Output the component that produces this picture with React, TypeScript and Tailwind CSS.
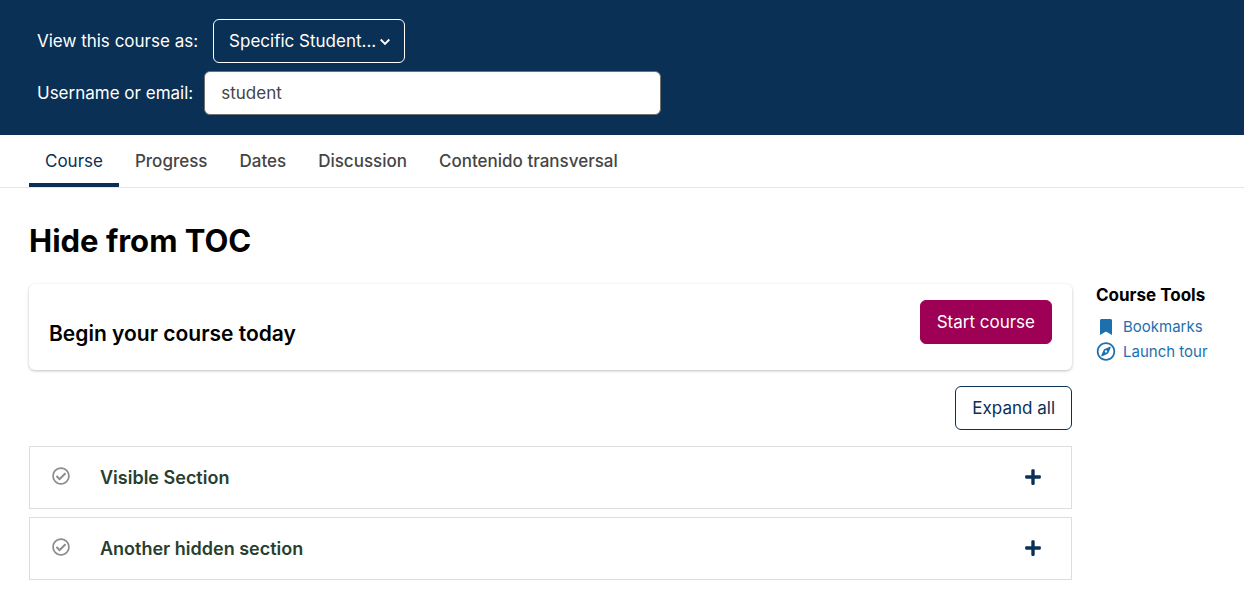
import { useState } from "react";
import { FaBookmark, FaPlus, FaRegCheckCircle, FaRegCompass } from "react-icons/fa";

const tabs = ["Course", "Progress", "Dates", "Discussion", "Contenido transversal"];
const sections = ["Visible Section", "Another hidden section"];

function MasqueradeBar() {
  const [user, setUser] = useState("student");
  return (
    <header className="flex h-[135px] flex-col gap-2 bg-[#0a3055] px-[37px] pt-[19px] text-white">
      <div className="flex items-center gap-[15px]">
        <label htmlFor="view-as">View this course as:</label>
        <div className="relative">
          <select
            id="view-as"
            className="h-11 w-48 appearance-none rounded-md border border-white bg-[#0a3055] pr-7 pl-[15px]"
          >
            <option>Specific Student...</option>
          </select>
          <svg
            viewBox="0 0 12 8"
            className="pointer-events-none absolute top-[19px] right-3.5 h-2 w-3"
            fill="none"
            stroke="currentColor"
            strokeWidth="1.9"
            aria-hidden="true"
          >
            <path d="M1.7 1.5 6 5.8l4.3-4.3" />
          </svg>
        </div>
      </div>
      <div className="flex items-center gap-[11px]">
        <label htmlFor="username">Username or email:</label>
        <input
          id="username"
          type="text"
          value={user}
          onChange={(e) => setUser(e.target.value)}
          className="h-11 w-full max-w-[457px] rounded-md border border-[#707070] bg-white px-4 text-[#454545]"
        />
      </div>
    </header>
  );
}

function CourseTabs() {
  return (
    <nav className="flex border-b border-[#e7e7e7] px-[29px]">
      {tabs.map((tab, i) => (
        <a
          key={tab}
          href="#"
          aria-current={i === 0 ? "page" : undefined}
          className={
            i === 0
              ? "h-[52px] border-b-4 border-[#0a3055] px-4 pt-3 text-[#0a3055]"
              : "h-[52px] px-4 pt-3 font-medium text-[#454545]"
          }
        >
          {tab}
        </a>
      ))}
    </nav>
  );
}

function Section({ title }: { title: string }) {
  return (
    <li className="flex h-[63px] items-center border border-[#dddddd] pr-[29px] pl-[22px]">
      <FaRegCheckCircle className="mb-1 size-[18px] text-[#8c8c8c]" aria-label="Incomplete section" />
      <h3 className="ml-[30px] flex-1 text-lg leading-7 font-semibold text-[#273f2f]">{title}</h3>
      <button type="button" className="mb-0.5" aria-label={"Expand " + title}>
        <FaPlus className="size-[18px] text-[#0a3055]" />
      </button>
    </li>
  );
}

export default function App() {
  return (
    <div className="bg-white font-['Inter',sans-serif] text-[17px] leading-7 text-black">
      <MasqueradeBar />
      <CourseTabs />
      <main className="px-[29px] pt-[33px]">
        <h1 className="text-[31px] leading-10 font-bold">Hide from TOC</h1>
        <div className="mt-[23px] flex gap-6">
          <div className="min-w-0 flex-1">
            <section className="flex h-[86px] items-start justify-between rounded-md px-5 pt-4 shadow-[0_1px_3px_rgba(0,0,0,0.25)]">
              <h2 className="mt-5 text-[21px] font-semibold">Begin your course today</h2>
              <button
                type="button"
                className="h-11 rounded-md border border-[#9d0054] bg-[#9d0054] px-4 text-white"
              >
                Start course
              </button>
            </section>
            <div className="mt-4 flex justify-end">
              <button type="button" className="h-11 rounded-md border border-[#0a3055] px-4 text-[#0a3055]">
                Expand all
              </button>
            </div>
            <ol className="mt-4 flex flex-col gap-2 pb-4">
              {sections.map((title) => (
                <Section key={title} title={title} />
              ))}
            </ol>
          </div>
          <aside className="w-[119px] shrink-0 whitespace-nowrap">
            <h2 className="-mt-[3px] font-bold">Course Tools</h2>
            <ul className="mt-[5px] text-[15px] leading-[25px] text-[#1d6fae]">
              <li>
                <a href="#" className="flex items-center gap-[7px]">
                  <FaBookmark className="h-4 w-5" aria-hidden="true" />
                  Bookmarks
                </a>
              </li>
              <li>
                <button type="button" className="flex items-center gap-[7px]">
                  <FaRegCompass className="h-[19px] w-5" aria-hidden="true" />
                  Launch tour
                </button>
              </li>
            </ul>
          </aside>
        </div>
      </main>
    </div>
  );
}
